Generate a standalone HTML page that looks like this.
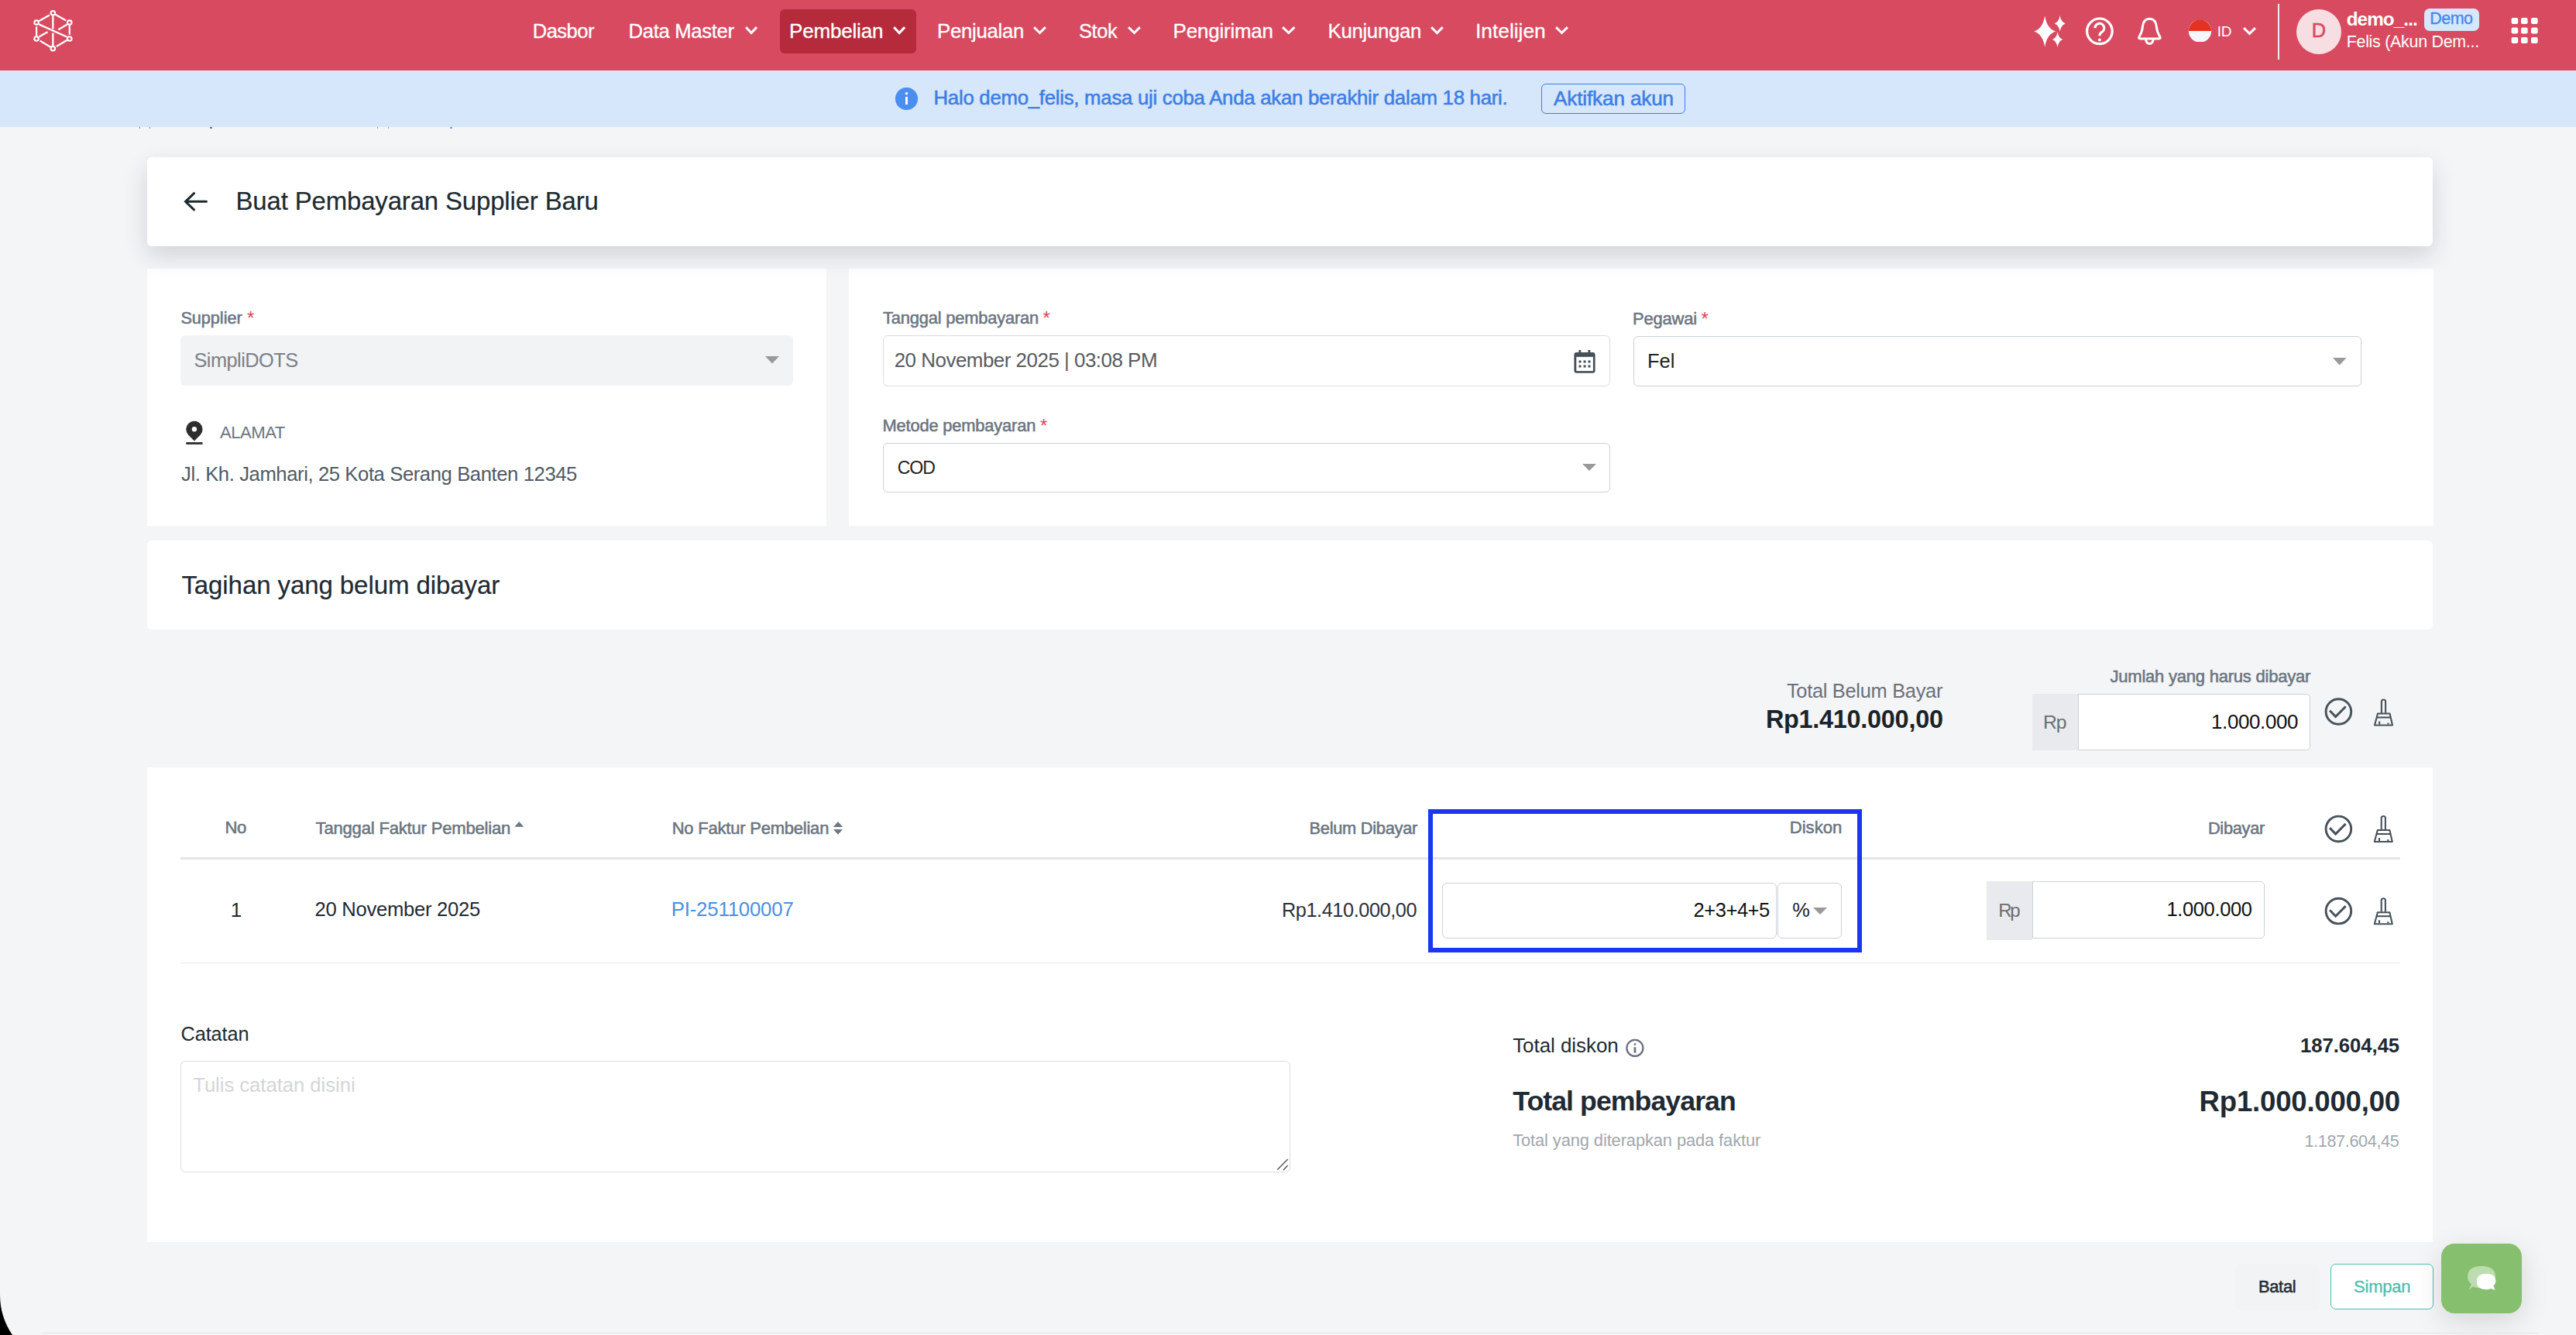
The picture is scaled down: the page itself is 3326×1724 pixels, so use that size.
<!DOCTYPE html>
<html><head><meta charset="utf-8"><title>Buat Pembayaran Supplier Baru</title>
<style>
html,body{margin:0;padding:0;}
body{width:3326px;height:1724px;position:relative;overflow:hidden;background:#f4f5f7;font-family:"Liberation Sans", sans-serif;}
.t{position:absolute;white-space:pre;line-height:1;}
svg{overflow:visible}
</style></head><body>
<div style="position:absolute;left:0px;top:0px;width:3326px;height:91px;background:#d84a60"></div>
<div style="position:absolute;left:1007px;top:12px;width:176px;height:57px;background:#b52b3b;border-radius:6px"></div>
<svg style="position:absolute;left:36px;top:8px" width="64" height="64" viewBox="36 8 64 64"><g stroke="#fff" stroke-width="2.3" fill="none"><line x1="50.24" y1="27.29" x2="63.85" y2="19.46"/><line x1="71.49" y1="18.65" x2="85.27" y2="26.51"/><line x1="89.79" y1="32.69" x2="89.79" y2="44.75"/><line x1="86.69" y1="51.79" x2="72.83" y2="60.00"/><line x1="65.27" y1="60.80" x2="51.58" y2="52.62"/><line x1="47.12" y1="46.35" x2="47.12" y2="34.29"/><line x1="68.36" y1="20.4" x2="68.36" y2="37.5"/><line x1="68.36" y1="42.5" x2="68.36" y2="59"/><line x1="50.2" y1="31.4" x2="86.6" y2="47.8"/><line x1="86.8" y1="31.4" x2="75.4" y2="38.2"/><line x1="50.4" y1="47.5" x2="61.5" y2="41.2"/><circle cx="68.36" cy="16.87" r="2.75" fill="none" stroke-width="2.1"/><circle cx="47.12" cy="29.09" r="2.75" fill="none" stroke-width="2.1"/><circle cx="89.79" cy="29.09" r="2.75" fill="none" stroke-width="2.1"/><circle cx="47.12" cy="49.95" r="2.75" fill="none" stroke-width="2.1"/><circle cx="89.79" cy="49.95" r="2.75" fill="none" stroke-width="2.1"/><circle cx="68.36" cy="62.65" r="2.75" fill="none" stroke-width="2.1"/></g></svg>
<svg style="position:absolute;left:959.8px;top:31.8px" width="20.2" height="15" viewBox="959.8 31.8 20.2 15"><polyline points="964.0,36.0 969.9,42.3 975.8,36.0" fill="none" stroke="#fff" stroke-width="3" stroke-linecap="square"/></svg>
<svg style="position:absolute;left:1150.7px;top:31.8px" width="20.3" height="15" viewBox="1150.7 31.8 20.3 15"><polyline points="1154.9,36.0 1160.85,42.3 1166.8,36.0" fill="none" stroke="#fff" stroke-width="3" stroke-linecap="square"/></svg>
<svg style="position:absolute;left:1332px;top:31.8px" width="21" height="15" viewBox="1332 31.8 21 15"><polyline points="1336.2,36.0 1342.5,42.3 1348.8,36.0" fill="none" stroke="#fff" stroke-width="3" stroke-linecap="square"/></svg>
<svg style="position:absolute;left:1454px;top:31.8px" width="21" height="15" viewBox="1454 31.8 21 15"><polyline points="1458.2,36.0 1464.5,42.3 1470.8,36.0" fill="none" stroke="#fff" stroke-width="3" stroke-linecap="square"/></svg>
<svg style="position:absolute;left:1653px;top:31.8px" width="21.6" height="15" viewBox="1653 31.8 21.6 15"><polyline points="1657.2,36.0 1663.8,42.3 1670.3999999999999,36.0" fill="none" stroke="#fff" stroke-width="3" stroke-linecap="square"/></svg>
<svg style="position:absolute;left:1844.6px;top:31.8px" width="20.9" height="15" viewBox="1844.6 31.8 20.9 15"><polyline points="1848.8,36.0 1855.05,42.3 1861.3,36.0" fill="none" stroke="#fff" stroke-width="3" stroke-linecap="square"/></svg>
<svg style="position:absolute;left:2005.5px;top:31.8px" width="21" height="15" viewBox="2005.5 31.8 21 15"><polyline points="2009.7,36.0 2016.0,42.3 2022.3,36.0" fill="none" stroke="#fff" stroke-width="3" stroke-linecap="square"/></svg>
<svg style="position:absolute;left:2620px;top:15px" width="52" height="51" viewBox="2620 15 52 51"><path fill="#fff" d="M2640.2 20.3 Q2642.72 36.946 2654.2 40.6 Q2642.72 44.254000000000005 2640.2 60.900000000000006 Q2637.68 44.254000000000005 2626.2 40.6 Q2637.68 36.946 2640.2 20.3Z M2659.7 20.099999999999998 Q2660.9959999999996 28.546 2666.8999999999996 30.4 Q2660.9959999999996 32.254 2659.7 40.7 Q2658.404 32.254 2652.5 30.4 Q2658.404 28.546 2659.7 20.099999999999998Z M2656.6 41 Q2657.824 49.2 2663.4 51 Q2657.824 52.8 2656.6 61 Q2655.3759999999997 52.8 2649.7999999999997 51 Q2655.3759999999997 49.2 2656.6 41Z"/></svg>
<svg style="position:absolute;left:2688px;top:18px" width="46" height="46" viewBox="2688 18 46 46"><circle cx="2710.9" cy="40.3" r="16.3" fill="none" stroke="#fff" stroke-width="3.2"/><path d="M2705 36.2 a5.9 5.9 0 1 1 8.8 5.1 c-2.1 1.3 -2.9 2.2 -2.9 5" fill="none" stroke="#fff" stroke-width="3.2"/><circle cx="2710.9" cy="51.6" r="2" fill="#fff"/></svg>
<svg style="position:absolute;left:2755px;top:18px" width="41" height="44" viewBox="2755 18 41 44"><path d="M2762 47.5 Q2766 41 2766.5 34 Q2767.5 24.5 2775.4 24.2 Q2783.3 24.5 2784.3 34 Q2784.8 41 2788.8 47.5 Q2790 50 2787.5 50 L2763.3 50 Q2760.8 50 2762 47.5Z" fill="none" stroke="#fff" stroke-width="3" stroke-linejoin="round"/><path d="M2770.5 51 Q2771.5 56.5 2775.4 56.5 Q2779.3 56.5 2780.3 51" fill="none" stroke="#fff" stroke-width="3"/></svg>
<svg style="position:absolute;left:2820px;top:20px" width="40" height="40" viewBox="2820 20 40 40"><defs><clipPath id="fc"><rect x="2820" y="26.1" width="40" height="28"/></clipPath></defs><g clip-path="url(#fc)"><circle cx="2840.5" cy="40" r="14.7" fill="#f5f7fa"/><path d="M2825.8 40 A14.7 14.7 0 0 1 2855.2 40Z" fill="#e5321f"/></g></svg>
<svg style="position:absolute;left:2894px;top:33.2px" width="21" height="14.9" viewBox="2894 33.2 21 14.9"><polyline points="2898.2,37.400000000000006 2904.5,43.6 2910.8,37.400000000000006" fill="none" stroke="#fff" stroke-width="3" stroke-linecap="square"/></svg>
<div style="position:absolute;left:2941px;top:5px;width:2.4px;height:72px;background:#e9eef2"></div>
<div style="position:absolute;left:2965px;top:11.8px;width:58px;height:58px;background:#f7dee3;border-radius:50%"></div>
<div style="position:absolute;left:3130px;top:11px;width:70.8px;height:28.9px;background:#d6e6fb;border-radius:7px"></div>
<svg style="position:absolute;left:3238px;top:18px" width="44" height="44" viewBox="3238 18 44 44"><rect x="3242.6" y="23" width="8.6" height="8" rx="2" fill="#fff"/><rect x="3242.6" y="35.5" width="8.6" height="8" rx="2" fill="#fff"/><rect x="3242.6" y="48" width="8.6" height="8" rx="2" fill="#fff"/><rect x="3255" y="23" width="8.6" height="8" rx="2" fill="#fff"/><rect x="3255" y="35.5" width="8.6" height="8" rx="2" fill="#fff"/><rect x="3255" y="48" width="8.6" height="8" rx="2" fill="#fff"/><rect x="3268" y="23" width="8.6" height="8" rx="2" fill="#fff"/><rect x="3268" y="35.5" width="8.6" height="8" rx="2" fill="#fff"/><rect x="3268" y="48" width="8.6" height="8" rx="2" fill="#fff"/></svg>
<div style="position:absolute;left:0px;top:91px;width:3326px;height:73px;background:#d6e6fb"></div>
<svg style="position:absolute;left:1150px;top:108px" width="42" height="40" viewBox="1150 108 42 40"><circle cx="1170.5" cy="127.5" r="14.6" fill="#4a8ff0"/><rect x="1169" y="125" width="3" height="10" fill="#fff"/><circle cx="1170.5" cy="120.7" r="1.8" fill="#fff"/></svg>
<div style="position:absolute;left:1990px;top:108px;width:186px;height:38.6px;border:1.3px solid #3b7fe3;border-radius:6px;box-sizing:border-box"></div>
<div style="position:absolute;left:179.5px;top:164px;width:1.6px;height:1.6px;background:#555;opacity:.8"></div>
<div style="position:absolute;left:192.6px;top:164px;width:1.6px;height:1.6px;background:#555;opacity:.8"></div>
<div style="position:absolute;left:271px;top:164px;width:3px;height:1.6px;background:#555;opacity:.8"></div>
<div style="position:absolute;left:486.5px;top:164px;width:1.6px;height:1.6px;background:#4a90e2;opacity:.8"></div>
<div style="position:absolute;left:500.6px;top:164px;width:1.6px;height:1.6px;background:#4a90e2;opacity:.8"></div>
<div style="position:absolute;left:580.5px;top:164px;width:3px;height:1.6px;background:#4a90e2;opacity:.8"></div>
<div style="position:absolute;left:190px;top:347px;width:877px;height:332px;background:#fff"></div>
<div style="position:absolute;left:1096px;top:347px;width:2046px;height:332px;background:#fff"></div>
<div style="position:absolute;left:190px;top:203px;width:2951px;height:115px;background:#fff;border-radius:6px;box-shadow:0 12px 30px rgba(30,40,50,0.16)"></div>
<svg style="position:absolute;left:232px;top:244px" width="40" height="32" viewBox="232 244 40 32"><path d="M250.5 249.7 L239.5 260.3 L250.5 270.8 M240 260.3 H266.5" fill="none" stroke="#1d2a30" stroke-width="3" stroke-linecap="round" stroke-linejoin="miter"/></svg>
<div style="position:absolute;left:233px;top:433px;width:791px;height:65px;background:#f2f3f5;border-radius:6px"></div>
<svg style="position:absolute;left:987px;top:459px" width="20" height="11.5" viewBox="987 459 20 11.5"><path d="M988 460 L1006 460 L997.0 469.5Z" fill="#999"/></svg>
<svg style="position:absolute;left:236px;top:540px" width="30" height="38" viewBox="236 540 30 38"><path d="M250.9 569.5 L243 561.5 A10.6 10.6 0 1 1 258.8 561.5Z" fill="#2d2d2d"/><circle cx="250.9" cy="554.3" r="3.2" fill="#fff"/><rect x="240.3" y="571.1" width="21.2" height="2.8" fill="#2d2d2d"/></svg>
<div style="position:absolute;left:1140px;top:433px;width:939px;height:66px;background:#fff;border:1px solid #d9dce1;border-radius:6px;box-sizing:border-box"></div>
<svg style="position:absolute;left:2028px;top:448px" width="36" height="38" viewBox="2028 448 36 38"><rect x="2032.4" y="455" width="27.2" height="26.8" rx="3.2" fill="#455059"/><rect x="2035.3" y="460.9" width="21.6" height="18.2" fill="#fff"/><rect x="2038.4" y="452" width="2.9" height="5" fill="#455059"/><rect x="2050.4" y="452" width="2.9" height="5" fill="#455059"/><rect x="2038.5" y="465.5" width="3" height="3" fill="#455059"/><rect x="2038.5" y="471.5" width="3" height="3" fill="#455059"/><rect x="2044.5" y="465.5" width="3" height="3" fill="#455059"/><rect x="2044.5" y="471.5" width="3" height="3" fill="#455059"/><rect x="2050.5" y="465.5" width="3" height="3" fill="#455059"/><rect x="2050.5" y="471.5" width="3" height="3" fill="#455059"/></svg>
<div style="position:absolute;left:1140px;top:572px;width:939px;height:64px;background:#fff;border:1px solid #ccd0d6;border-radius:6px;box-sizing:border-box"></div>
<svg style="position:absolute;left:2042px;top:597.5px" width="20" height="11" viewBox="2042 597.5 20 11"><path d="M2043 598.5 L2061 598.5 L2052.0 607.5Z" fill="#999"/></svg>
<div style="position:absolute;left:2109px;top:434px;width:940px;height:64.5px;background:#fff;border:1px solid #ccd0d6;border-radius:6px;box-sizing:border-box"></div>
<svg style="position:absolute;left:3011px;top:460.5px" width="19.5" height="11.5" viewBox="3011 460.5 19.5 11.5"><path d="M3012 461.5 L3029.5 461.5 L3020.75 471Z" fill="#999"/></svg>
<div style="position:absolute;left:190px;top:698px;width:2951px;height:114.5px;background:#fff;border-radius:6px"></div>
<div style="position:absolute;left:2624px;top:896px;width:59px;height:73px;background:#e9eaee"></div>
<div style="position:absolute;left:2683px;top:896px;width:300px;height:73px;background:#fff;border:1px solid #ccd0d6;border-radius:0 5px 5px 0;box-sizing:border-box"></div>
<svg style="position:absolute;left:2996px;top:896px" width="104" height="46" viewBox="2996 896 104 46"><circle cx="3019.4" cy="919.0" r="16.3" fill="none" stroke="#47525b" stroke-width="2.9"/><polyline points="3008.1,917.7 3015.6,925.6 3028.6,912.5" fill="none" stroke="#47525b" stroke-width="3"/><g fill="none" stroke="#47525b" stroke-width="2.1" stroke-linejoin="round"><path d="M3074.9 921.1 V906.0 Q3074.9 903.5 3077.5 903.5 Q3080.1 903.5 3080.1 906.0 V921.1"/><path d="M3070 921.5 L3085.6 921.5 L3089 936.5 L3066 936.5 Z"/><line x1="3069" y1="926.5" x2="3086.5" y2="926.5"/><line x1="3072.2" y1="931.5" x2="3072.2" y2="935.5"/><line x1="3083.5" y1="933.5" x2="3083.5" y2="935.5"/></g></svg>
<div style="position:absolute;left:190px;top:991px;width:2951px;height:612.5px;background:#fff"></div>
<svg style="position:absolute;left:660px;top:1056px" width="20" height="16" viewBox="660 1056 20 16"><path d="M664.3 1067.7 L670.3 1061 L676.3 1067.7Z" fill="#6e7781"/></svg>
<svg style="position:absolute;left:1072px;top:1056px" width="20" height="26" viewBox="1072 1056 20 26"><path d="M1075.9 1067.9 L1082 1061 L1088 1067.9Z M1075.9 1070.9 L1082 1077.8 L1088 1070.9Z" fill="#6e7781"/></svg>
<svg style="position:absolute;left:2996px;top:1046px" width="104" height="48" viewBox="2996 1046 104 48"><circle cx="3019.4" cy="1070.3999999999999" r="16.3" fill="none" stroke="#47525b" stroke-width="2.9"/><polyline points="3008.1,1069.1 3015.6,1076.9999999999998 3028.6,1063.8999999999999" fill="none" stroke="#47525b" stroke-width="3"/><g fill="none" stroke="#47525b" stroke-width="2.1" stroke-linejoin="round"><path d="M3074.7000000000003 1071.6 V1056.5 Q3074.7000000000003 1054 3077.3 1054 Q3079.9 1054 3079.9 1056.5 V1071.6"/><path d="M3069.8 1072 L3085.4 1072 L3088.8 1087 L3065.8 1087 Z"/><line x1="3068.8" y1="1077" x2="3086.3" y2="1077"/><line x1="3072.0" y1="1082" x2="3072.0" y2="1086"/><line x1="3083.3" y1="1084" x2="3083.3" y2="1086"/></g></svg>
<div style="position:absolute;left:233px;top:1107px;width:2866px;height:3px;background:#e4e5ea"></div>
<div style="position:absolute;left:1862px;top:1140px;width:432px;height:71.5px;background:#fff;border:1px solid #ccd0d6;border-radius:6px;box-sizing:border-box"></div>
<div style="position:absolute;left:2294.5px;top:1140px;width:83px;height:71.5px;background:#fff;border:1px solid #ccd0d6;border-radius:6px;box-sizing:border-box"></div>
<svg style="position:absolute;left:2340px;top:1170.5px" width="20" height="11" viewBox="2340 1170.5 20 11"><path d="M2341 1171.5 L2359 1171.5 L2350.0 1180.5Z" fill="#999"/></svg>
<div style="position:absolute;left:2565px;top:1138px;width:59px;height:76px;background:#e9eaee"></div>
<div style="position:absolute;left:2624px;top:1138px;width:300px;height:74px;background:#fff;border:1px solid #ccd0d6;border-radius:0 5px 5px 0;box-sizing:border-box"></div>
<svg style="position:absolute;left:2996px;top:1152px" width="104" height="48" viewBox="2996 1152 104 48"><circle cx="3019.4" cy="1176.6" r="16.3" fill="none" stroke="#47525b" stroke-width="2.9"/><polyline points="3008.1,1175.3 3015.6,1183.1999999999998 3028.6,1170.1" fill="none" stroke="#47525b" stroke-width="3"/><g fill="none" stroke="#47525b" stroke-width="2.1" stroke-linejoin="round"><path d="M3074.7000000000003 1177.8 V1162.7 Q3074.7000000000003 1160.2 3077.3 1160.2 Q3079.9 1160.2 3079.9 1162.7 V1177.8"/><path d="M3069.8 1178.2 L3085.4 1178.2 L3088.8 1193.2 L3065.8 1193.2 Z"/><line x1="3068.8" y1="1183.2" x2="3086.3" y2="1183.2"/><line x1="3072.0" y1="1188.2" x2="3072.0" y2="1192.2"/><line x1="3083.3" y1="1190.2" x2="3083.3" y2="1192.2"/></g></svg>
<div style="position:absolute;left:233px;top:1242.5px;width:2866px;height:1.3px;background:#e6e7eb"></div>
<div style="position:absolute;left:233px;top:1370px;width:1433px;height:144px;background:#fff;border:1.3px solid #d9dce1;border-radius:6px;box-sizing:border-box"></div>
<svg style="position:absolute;left:1645px;top:1494px" width="20" height="20" viewBox="1645 1494 20 20"><g stroke="#5a5a5a" stroke-width="1.5"><line x1="1649.3" y1="1510.5" x2="1662.7" y2="1497"/><line x1="1657" y1="1511" x2="1662.7" y2="1505"/></g></svg>
<svg style="position:absolute;left:2095px;top:1337px" width="32" height="33" viewBox="2095 1337 32 33"><circle cx="2110.9" cy="1353.4" r="10.5" fill="none" stroke="#6d6f80" stroke-width="2.3"/><rect x="2109.6" y="1352.2" width="2.7" height="7.5" fill="#6d6f80"/><circle cx="2110.95" cy="1348.6" r="1.45" fill="#6d6f80"/></svg>
<div style="position:absolute;left:2886px;top:1631.6px;width:109px;height:60.4px;background:#f2f3f5;border-radius:7px"></div>
<div style="position:absolute;left:3009px;top:1632px;width:132.6px;height:59px;background:#fff;border:1.3px solid #4fbcab;border-radius:7px;box-sizing:border-box"></div>
<div style="position:absolute;left:3152px;top:1605.8px;width:104px;height:90.2px;background:#86bf6e;border-radius:17px;box-shadow:0 10px 36px rgba(0,0,0,0.13)"></div>
<svg style="position:absolute;left:3180px;top:1630px" width="50" height="42" viewBox="3180 1630 50 42"><path d="M3187.5 1665.5 L3191 1658.5 Q3186 1654 3186 1649 Q3186 1635 3204 1635 Q3222 1635 3222 1649 Q3222 1663 3204 1663 Q3197 1663 3193 1661.5Z" fill="#bddcaf"/><path d="M3221.5 1666 L3219.5 1660.5 Q3222.3 1657.5 3222.3 1655 Q3222.3 1644.8 3210 1644.8 Q3197.8 1644.8 3197.8 1655 Q3197.8 1665.2 3210 1665.2 Q3214 1665.2 3216 1664Z" fill="#fff"/></svg>
<div style="position:absolute;left:54px;top:1720.5px;width:3224px;height:1.3px;background:#e3e5e8"></div>
<div class="t" style="left:687.70px;top:27.81px;font-size:25.59px;color:#fff;letter-spacing:-0.527px;-webkit-text-stroke:0.3px #fff;">Dasbor</div>
<div class="t" style="left:811.50px;top:27.70px;font-size:25.72px;color:#fff;letter-spacing:-0.363px;-webkit-text-stroke:0.3px #fff;">Data Master</div>
<div class="t" style="left:1019.00px;top:27.41px;font-size:26.06px;color:#fff;letter-spacing:-0.199px;-webkit-text-stroke:0.3px #fff;">Pembelian</div>
<div class="t" style="left:1210.00px;top:27.60px;font-size:25.84px;color:#fff;letter-spacing:-0.316px;-webkit-text-stroke:0.3px #fff;">Penjualan</div>
<div class="t" style="left:1393.00px;top:27.91px;font-size:25.47px;color:#fff;letter-spacing:-0.402px;-webkit-text-stroke:0.3px #fff;">Stok</div>
<div class="t" style="left:1514.60px;top:27.46px;font-size:26.00px;color:#fff;letter-spacing:-0.228px;-webkit-text-stroke:0.3px #fff;">Pengiriman</div>
<div class="t" style="left:1714.50px;top:27.59px;font-size:25.84px;color:#fff;letter-spacing:-0.331px;-webkit-text-stroke:0.3px #fff;">Kunjungan</div>
<div class="t" style="left:1905.00px;top:27.17px;font-size:26.35px;color:#fff;letter-spacing:-0.013px;-webkit-text-stroke:0.3px #fff;">Intelijen</div>
<div class="t" style="left:2862.70px;top:30.92px;font-size:19.02px;color:#fff;letter-spacing:-0.183px;">ID</div>
<div class="t" style="left:2984.80px;top:26.60px;font-size:25.36px;color:#d84a60;-webkit-text-stroke:0.55px #d84a60;">D</div>
<div class="t" style="left:3029.70px;top:12.70px;font-size:24.29px;color:#fff;font-weight:700;letter-spacing:-0.928px;">demo_...</div>
<div class="t" style="left:3137.30px;top:13.95px;font-size:21.49px;color:#3f86f2;letter-spacing:-0.543px;-webkit-text-stroke:0.3px #3f86f2;">Demo</div>
<div class="t" style="left:3029.70px;top:44.18px;font-size:21.45px;color:#fff;letter-spacing:-0.285px;">Felis (Akun Dem...</div>
<div class="t" style="left:1205.50px;top:114.34px;font-size:25.79px;color:#3b7fe3;letter-spacing:-0.269px;-webkit-text-stroke:0.55px #3b7fe3;">Halo demo_felis, masa uji coba Anda akan berakhir dalam 18 hari.</div>
<div class="t" style="left:2006.00px;top:114.06px;font-size:26.12px;color:#3b7fe3;letter-spacing:-0.135px;-webkit-text-stroke:0.55px #3b7fe3;">Aktifkan akun</div>
<div class="t" style="left:304.50px;top:244.34px;font-size:32.93px;color:#1d2a30;letter-spacing:-0.137px;-webkit-text-stroke:0.2px #1d2a30;">Buat Pembayaran Supplier Baru</div>
<div class="t" style="left:233.40px;top:399.79px;font-size:21.68px;color:#6b7580;letter-spacing:-0.035px;-webkit-text-stroke:0.55px #6b7580;">Supplier</div>
<div class="t" style="left:318.90px;top:399.34px;font-size:24.00px;color:#e0445c;">*</div>
<div class="t" style="left:250.40px;top:452.97px;font-size:25.39px;color:#7b8088;letter-spacing:-0.528px;">SimpliDOTS</div>
<div class="t" style="left:284.00px;top:547.52px;font-size:22.11px;color:#6b7580;letter-spacing:-0.503px;">ALAMAT</div>
<div class="t" style="left:234.00px;top:600.45px;font-size:25.65px;color:#505a64;letter-spacing:-0.406px;">Jl. Kh. Jamhari, 25 Kota Serang Banten 12345</div>
<div class="t" style="left:1140.00px;top:399.63px;font-size:21.87px;color:#6b7580;letter-spacing:-0.177px;-webkit-text-stroke:0.55px #6b7580;">Tanggal pembayaran</div>
<div class="t" style="left:1346.60px;top:398.84px;font-size:24.00px;color:#e0445c;">*</div>
<div class="t" style="left:1154.70px;top:452.50px;font-size:25.95px;color:#575a5e;letter-spacing:-0.499px;">20 November 2025 | 03:08 PM</div>
<div class="t" style="left:1139.50px;top:538.52px;font-size:21.88px;color:#6b7580;letter-spacing:-0.174px;-webkit-text-stroke:0.55px #6b7580;">Metode pembayaran</div>
<div class="t" style="left:1343.00px;top:537.84px;font-size:24.00px;color:#e0445c;">*</div>
<div class="t" style="left:1158.70px;top:592.89px;font-size:23.10px;color:#222;letter-spacing:-1.070px;">COD</div>
<div class="t" style="left:2108.00px;top:400.58px;font-size:21.92px;color:#6b7580;letter-spacing:-0.161px;-webkit-text-stroke:0.55px #6b7580;">Pegawai</div>
<div class="t" style="left:2196.60px;top:399.84px;font-size:24.00px;color:#e0445c;">*</div>
<div class="t" style="left:2127.00px;top:453.60px;font-size:25.48px;color:#222;letter-spacing:-0.011px;">Fel</div>
<div class="t" style="left:234.40px;top:739.27px;font-size:33.02px;color:#1f2a33;letter-spacing:-0.087px;-webkit-text-stroke:0.2px #1f2a33;">Tagihan yang belum dibayar</div>
<div class="t" style="left:2306.90px;top:879.57px;font-size:25.39px;color:#6b7078;letter-spacing:-0.279px;">Total Belum Bayar</div>
<div class="t" style="left:2279.90px;top:912.55px;font-size:32.44px;color:#1a2329;font-weight:700;letter-spacing:-0.269px;">Rp1.410.000,00</div>
<div class="t" style="left:2724.50px;top:862.58px;font-size:22.05px;color:#6b7580;letter-spacing:-0.245px;-webkit-text-stroke:0.55px #6b7580;">Jumlah yang harus dibayar</div>
<div class="t" style="left:2638.00px;top:920.62px;font-size:24.74px;color:#6a6e74;letter-spacing:-1.062px;">Rp</div>
<div class="t" style="left:2855.00px;top:919.59px;font-size:25.96px;color:#111;letter-spacing:-0.370px;">1.000.000</div>
<div class="t" style="left:290.50px;top:1058.48px;font-size:22.17px;color:#6b7580;letter-spacing:-0.501px;-webkit-text-stroke:0.55px #6b7580;">No</div>
<div class="t" style="left:407.60px;top:1058.60px;font-size:22.03px;color:#6b7580;letter-spacing:-0.179px;-webkit-text-stroke:0.55px #6b7580;">Tanggal Faktur Pembelian</div>
<div class="t" style="left:867.70px;top:1058.65px;font-size:21.97px;color:#6b7580;letter-spacing:-0.205px;-webkit-text-stroke:0.55px #6b7580;">No Faktur Pembelian</div>
<div class="t" style="left:1690.50px;top:1058.77px;font-size:21.82px;color:#6b7580;letter-spacing:-0.274px;-webkit-text-stroke:0.55px #6b7580;">Belum Dibayar</div>
<div class="t" style="left:2310.70px;top:1058.49px;font-size:22.15px;color:#6b7580;letter-spacing:-0.012px;-webkit-text-stroke:0.55px #6b7580;">Diskon</div>
<div class="t" style="left:2850.90px;top:1058.83px;font-size:21.75px;color:#6b7580;letter-spacing:-0.267px;-webkit-text-stroke:0.55px #6b7580;">Dibayar</div>
<div class="t" style="left:297.80px;top:1162.09px;font-size:26.09px;color:#1f2a33;">1</div>
<div class="t" style="left:406.60px;top:1162.48px;font-size:25.61px;color:#1f2a33;letter-spacing:-0.278px;">20 November 2025</div>
<div class="t" style="left:866.70px;top:1162.34px;font-size:25.78px;color:#4a90e2;letter-spacing:-0.177px;">PI-251100007</div>
<div class="t" style="left:1655.00px;top:1162.74px;font-size:25.31px;color:#2a3238;letter-spacing:-0.429px;">Rp1.410.000,00</div>
<div class="t" style="left:2186.60px;top:1162.54px;font-size:25.55px;color:#111;letter-spacing:-0.488px;">2+3+4+5</div>
<div class="t" style="left:2314.30px;top:1162.70px;font-size:25.36px;color:#222;">%</div>
<div class="t" style="left:2580.20px;top:1163.72px;font-size:24.14px;color:#6a6e74;letter-spacing:-2.322px;">Rp</div>
<div class="t" style="left:2797.40px;top:1161.88px;font-size:25.50px;color:#111;letter-spacing:-0.350px;">1.000.000</div>
<div class="t" style="left:233.60px;top:1323.44px;font-size:25.31px;color:#1d2a30;letter-spacing:-0.122px;">Catatan</div>
<div class="t" style="left:249.20px;top:1389.32px;font-size:25.69px;color:#d3d6d9;letter-spacing:-0.049px;">Tulis catatan disini</div>
<div class="t" style="left:1953.20px;top:1336.98px;font-size:25.98px;color:#1d2a30;letter-spacing:-0.054px;">Total diskon</div>
<div class="t" style="left:2970.00px;top:1337.51px;font-size:25.71px;color:#1f2a33;font-weight:700;letter-spacing:-0.053px;">187.604,45</div>
<div class="t" style="left:1953.20px;top:1404.94px;font-size:35.66px;color:#1f2a33;font-weight:700;letter-spacing:-0.928px;">Total pembayaran</div>
<div class="t" style="left:2839.60px;top:1404.56px;font-size:36.59px;color:#1f2a33;font-weight:700;letter-spacing:-0.215px;">Rp1.000.000,00</div>
<div class="t" style="left:1953.20px;top:1462.42px;font-size:21.89px;color:#a1a7ae;letter-spacing:-0.106px;">Total yang diterapkan pada faktur</div>
<div class="t" style="left:2975.40px;top:1462.76px;font-size:21.59px;color:#a1a7ae;letter-spacing:-0.326px;">1.187.604,45</div>
<div class="t" style="left:2915.90px;top:1650.83px;font-size:21.86px;color:#1f2a33;letter-spacing:-0.267px;-webkit-text-stroke:0.55px #1f2a33;">Batal</div>
<div class="t" style="left:3039.10px;top:1650.71px;font-size:22.01px;color:#4fbcab;letter-spacing:-0.232px;-webkit-text-stroke:0.3px #4fbcab;">Simpan</div>
<div style="position:absolute;left:1844px;top:1045px;width:560px;height:185px;border:6px solid #1b35f2;box-sizing:border-box"></div>
<svg style="position:absolute;left:0px;top:1660px" width="30" height="64" viewBox="0 1660 30 64"><path d="M0 1672 A92.5 92.5 0 0 0 16 1724 L0 1724Z" fill="#000"/></svg>
</body></html>
